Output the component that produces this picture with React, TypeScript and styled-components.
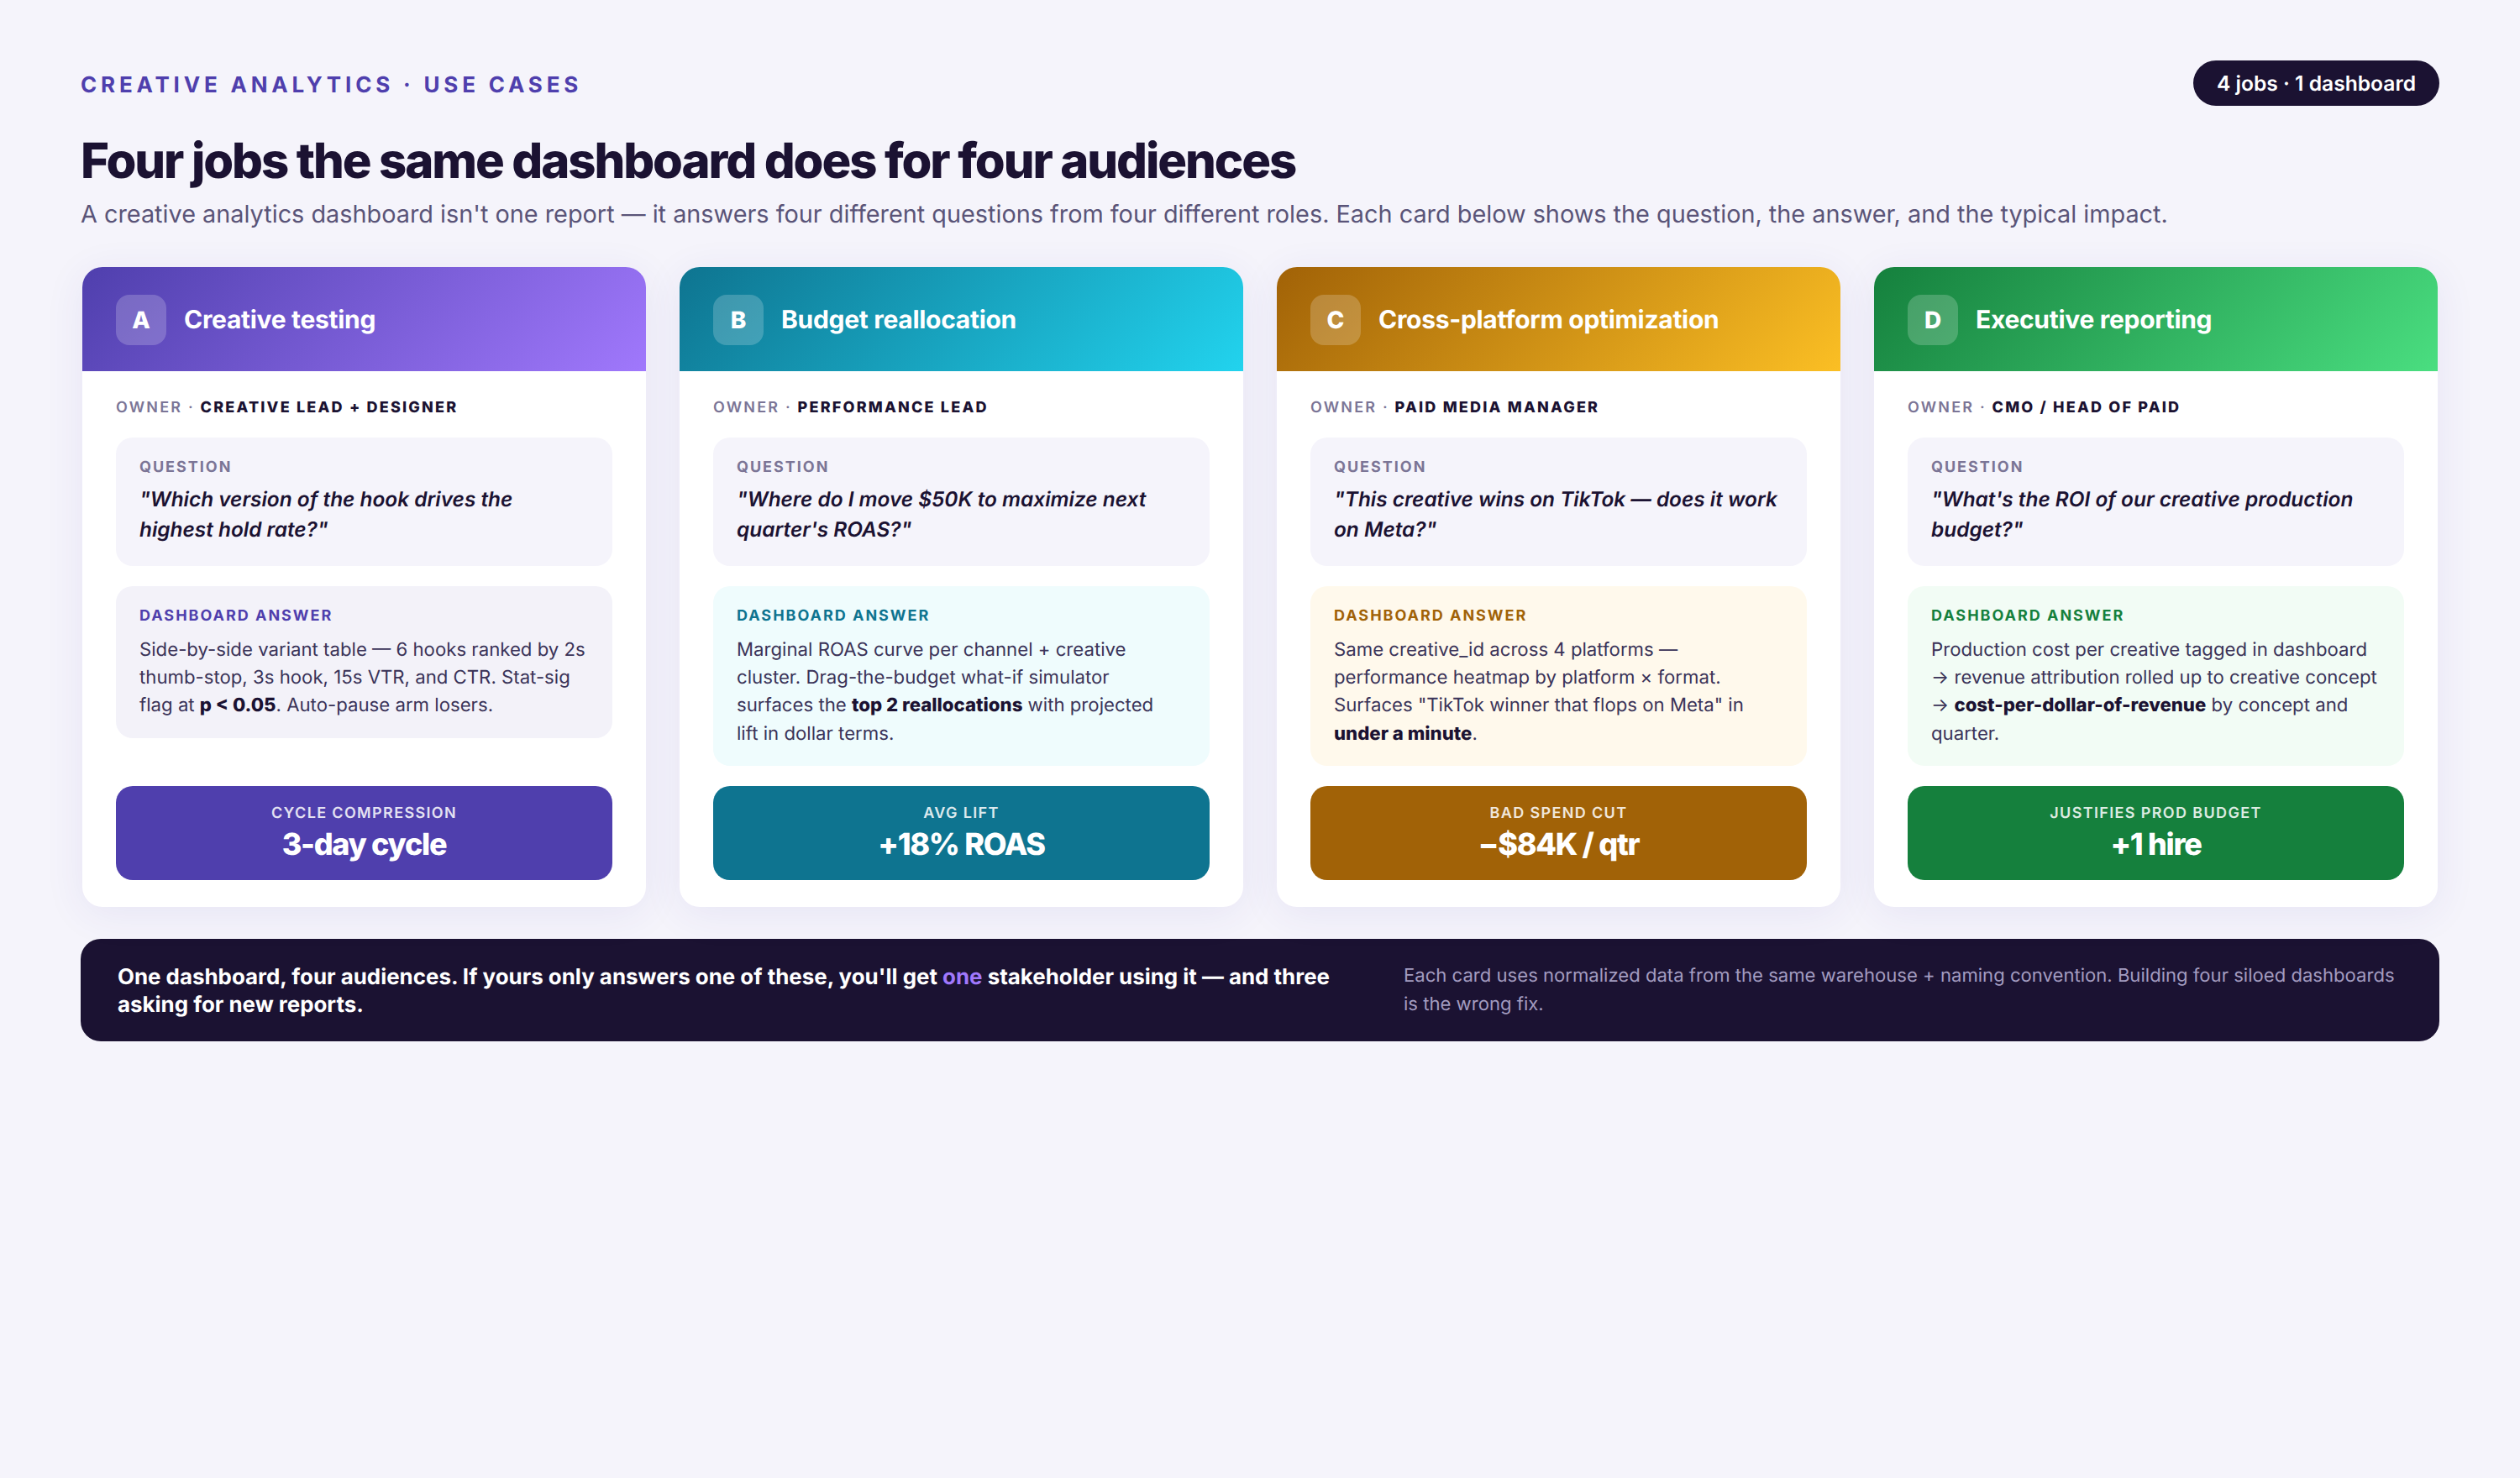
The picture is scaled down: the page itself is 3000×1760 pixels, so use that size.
import React from "react";
import styled, { createGlobalStyle } from "styled-components";

interface ITone {
  main: string;
  end: string;
  soft: string;
}

interface IJob {
  letter: string;
  title: string;
  owner: string;
  question: string;
  answer: React.ReactNode;
  metricLabel: string;
  metricValue: string;
  tone: ITone;
}

const GlobalStyle = createGlobalStyle`
  html, body {
    margin: 0;
    background: #f5f4fb;
  }
  body {
    font-family: "Inter", "Liberation Sans", sans-serif;
    color: #1b1232;
    text-rendering: geometricPrecision;
  }
  * {
    box-sizing: border-box;
  }
`;

const Page = styled.div`
  width: 3000px;
  min-height: 1760px;
  padding: 72px 96px;
  background: #f5f4fb;
`;

const TopRow = styled.div`
  display: flex;
  align-items: center;
  justify-content: space-between;
`;

const Eyebrow = styled.div`
  padding-top: 4px;
  font-size: 26px;
  font-weight: 700;
  letter-spacing: 0.185em;
  color: #4f3fad;
`;

const Pill = styled.div`
  padding: 12px 28px;
  border-radius: 999px;
  background: #1b1232;
  color: #fff;
  font-size: 24.6px;
  line-height: 30px;
  font-weight: 600;
`;

const Title = styled.h1`
  margin: 30px 0 0;
  font-size: 58px;
  line-height: 70px;
  font-weight: 800;
  letter-spacing: -0.036em;
  color: #1b1232;
`;

const Subtitle = styled.p`
  margin: 8px 0 0;
  font-size: 28.84px;
  line-height: 42px;
  color: #5a5478;
`;

const Cards = styled.div`
  display: grid;
  grid-template-columns: repeat(4, 1fr);
  gap: 40px;
  margin: 42px 2px 0;
`;

const Card = styled.div`
  display: flex;
  flex-direction: column;
  border-radius: 24px;
  overflow: hidden;
  background: #fff;
  box-shadow: 0 8px 48px rgba(70, 50, 160, 0.08);
`;

const CardHead = styled.div<{ $tone: ITone }>`
  display: flex;
  align-items: center;
  gap: 21px;
  height: 124px;
  padding: 1px 40px 0;
  background: linear-gradient(135deg, ${(p) => p.$tone.main}, ${(p) => p.$tone.end});
`;

const Letter = styled.div`
  display: flex;
  align-items: center;
  justify-content: center;
  width: 60px;
  height: 60px;
  border-radius: 16px;
  background: rgba(255, 255, 255, 0.2);
  color: #fff;
  font-size: 28px;
  font-weight: 800;
`;

const CardTitle = styled.div`
  color: #fff;
  font-size: 30px;
  font-weight: 700;
  letter-spacing: -0.01em;
`;

const CardBody = styled.div`
  display: flex;
  flex: 1;
  flex-direction: column;
  gap: 24px;
  padding: 32px 40px;
`;

const Owner = styled.div`
  font-size: 18px;
  line-height: 23px;
  font-weight: 600;
  letter-spacing: 0.122em;
  color: #7b7596;

  strong {
    font-weight: 800;
    color: #1b1232;
  }
`;

const Box = styled.div<{ $bg: string }>`
  padding: 24px 28px 22px;
  border-radius: 20px;
  background: ${(p) => p.$bg};
`;

const BoxLabel = styled.div<{ $color: string }>`
  margin-bottom: 7px;
  font-size: 18px;
  line-height: 24px;
  font-weight: 700;
  letter-spacing: 0.11em;
  color: ${(p) => p.$color};
`;

const Question = styled.div`
  margin-bottom: 3.5px;
  font-size: 24.4px;
  line-height: 36.25px;
  font-weight: 600;
  font-style: italic;
  color: #1b1232;
`;

const Answer = styled.div`
  margin-top: 10.5px;
  font-size: 22.2px;
  line-height: 33.35px;
  color: #3a3358;

  strong {
    font-weight: 800;
    color: #1b1232;
  }
`;

const Metric = styled.div<{ $bg: string }>`
  margin-top: auto;
  padding: 22px 24px 21px;
  border-radius: 20px;
  background: ${(p) => p.$bg};
  color: #fff;
  text-align: center;
`;

const MetricLabel = styled.div`
  font-size: 18px;
  line-height: 22px;
  font-weight: 600;
  letter-spacing: 0.075em;
  opacity: 0.85;
`;

const MetricValue = styled.div`
  margin-top: 3px;
  font-size: 36px;
  line-height: 44px;
  font-weight: 800;
  letter-spacing: -0.036em;
`;

const Banner = styled.div`
  display: flex;
  align-items: center;
  gap: 48px;
  height: 122px;
  margin-top: 38px;
  padding: 2px 44px 0;
  border-radius: 24px;
  background: #1b1232;
`;

const BannerLead = styled.div`
  flex: 1;
  font-size: 25.9px;
  line-height: 33px;
  font-weight: 700;
  color: #fff;

  em {
    font-style: normal;
    color: #a078fc;
  }
`;

const BannerNote = styled.div`
  width: 1189px;
  font-size: 22.1px;
  line-height: 33.5px;
  color: #a39cc0;
`;

const purple: ITone = { main: "#4f3fad", end: "#a078fc", soft: "#f3f2f9" };
const teal: ITone = { main: "#0e7490", end: "#22d3ee", soft: "#effcfd" };
const amber: ITone = { main: "#a16207", end: "#fbbf24", soft: "#fff9ec" };
const green: ITone = { main: "#15803d", end: "#4ade80", soft: "#f2fcf5" };

const jobs: IJob[] = [
  {
    letter: "A",
    title: "Creative testing",
    owner: "Creative lead + designer",
    question: '"Which version of the hook drives the highest hold rate?"',
    answer: (
      <>
        Side-by-side variant table — 6 hooks ranked by 2s thumb-stop, 3s hook, 15s VTR, and CTR.
        Stat-sig flag at <strong>p &lt; 0.05</strong>. Auto-pause arm losers.
      </>
    ),
    metricLabel: "Cycle compression",
    metricValue: "3-day cycle",
    tone: purple,
  },
  {
    letter: "B",
    title: "Budget reallocation",
    owner: "Performance lead",
    question: "\"Where do I move $50K to maximize next quarter's ROAS?\"",
    answer: (
      <>
        Marginal ROAS curve per channel + creative cluster. Drag-the-budget what-if simulator
        surfaces the <strong>top 2 reallocations</strong> with projected
        <br />
        lift in dollar terms.
      </>
    ),
    metricLabel: "Avg lift",
    metricValue: "+18% ROAS",
    tone: teal,
  },
  {
    letter: "C",
    title: "Cross-platform optimization",
    owner: "Paid media manager",
    question: '"This creative wins on TikTok — does it work on Meta?"',
    answer: (
      <>
        Same creative_id across 4 platforms — performance heatmap by platform × format. Surfaces
        "TikTok winner that flops on Meta" in <strong>under a minute</strong>.
      </>
    ),
    metricLabel: "Bad spend cut",
    metricValue: "−$84K / qtr",
    tone: amber,
  },
  {
    letter: "D",
    title: "Executive reporting",
    owner: "CMO / Head of Paid",
    question: "\"What's the ROI of our creative production budget?\"",
    answer: (
      <>
        Production cost per creative tagged in dashboard → revenue attribution rolled up to
        creative concept → <strong>cost-per-dollar-of-revenue</strong> by concept and quarter.
      </>
    ),
    metricLabel: "Justifies prod budget",
    metricValue: "+1 hire",
    tone: green,
  },
];

export default function App() {
  return (
    <Page>
      <GlobalStyle />
      <TopRow>
        <Eyebrow>CREATIVE ANALYTICS · USE CASES</Eyebrow>
        <Pill>4 jobs · 1 dashboard</Pill>
      </TopRow>
      <Title>Four jobs the same dashboard does for four audiences</Title>
      <Subtitle>
        A creative analytics dashboard isn't one report — it answers four different questions from
        four different roles. Each card below shows the question, the answer, and the typical
        impact.
      </Subtitle>

      <Cards>
        {jobs.map((job) => (
          <Card key={job.letter}>
            <CardHead $tone={job.tone}>
              <Letter>{job.letter}</Letter>
              <CardTitle>{job.title}</CardTitle>
            </CardHead>
            <CardBody>
              <Owner>
                OWNER · <strong>{job.owner.toUpperCase()}</strong>
              </Owner>
              <Box $bg="#f5f4fb">
                <BoxLabel $color="#7b7596">QUESTION</BoxLabel>
                <Question>{job.question}</Question>
              </Box>
              <Box $bg={job.tone.soft}>
                <BoxLabel $color={job.tone.main}>DASHBOARD ANSWER</BoxLabel>
                <Answer>{job.answer}</Answer>
              </Box>
              <Metric $bg={job.tone.main}>
                <MetricLabel>{job.metricLabel.toUpperCase()}</MetricLabel>
                <MetricValue>{job.metricValue}</MetricValue>
              </Metric>
            </CardBody>
          </Card>
        ))}
      </Cards>

      <Banner>
        <BannerLead>
          One dashboard, four audiences. If yours only answers one of these, you'll get{" "}
          <em>one</em> stakeholder using it — and three asking for new reports.
        </BannerLead>
        <BannerNote>
          Each card uses normalized data from the same warehouse + naming convention. Building four
          siloed dashboards is the wrong fix.
        </BannerNote>
      </Banner>
    </Page>
  );
}
